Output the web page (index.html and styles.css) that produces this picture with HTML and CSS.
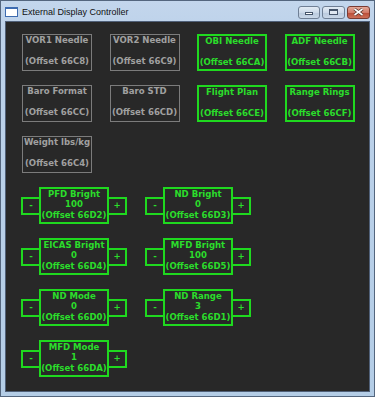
FILE: index.html
```html
<!DOCTYPE html>
<html lang="en">
  <head>
    <meta charset="UTF-8" />
    <meta name="viewport" content="width=device-width, initial-scale=1.0" />
    <title>External Display Controller</title>
    <link rel="stylesheet" href="styles.css">
  </head>
  <body>
    <div class="window">
      <div class="titlebar">
        <span class="app-icon"></span>
        <span class="title">External Display Controller</span>
        <div class="caption-btns">
          <span class="cap min"><i></i></span>
          <span class="cap max"><i></i></span>
          <span class="cap close">
            <svg width="11" height="8" viewBox="0 0 11 8">
              <path d="M1.5 1 L9.5 7 M9.5 1 L1.5 7" stroke="#4a2a24" stroke-width="3" />
              <path d="M1.5 1 L9.5 7 M9.5 1 L1.5 7" stroke="#fff" stroke-width="1.6" />
            </svg>
          </span>
        </div>
      </div>

      <div class="client">
        <div class="toggles">
          <div class="toggle off">VOR1 Needle<br><br>(Offset 66C8)</div>
          <div class="toggle off">VOR2 Needle<br><br>(Offset 66C9)</div>
          <div class="toggle on">OBI Needle<br><br>(Offset 66CA)</div>
          <div class="toggle on">ADF Needle<br><br>(Offset 66CB)</div>
          <div class="toggle off">Baro Format<br><br>(Offset 66CC)</div>
          <div class="toggle off">Baro STD<br><br>(Offset 66CD)</div>
          <div class="toggle on">Flight Plan<br><br>(Offset 66CE)</div>
          <div class="toggle on">Range Rings<br><br>(Offset 66CF)</div>
          <div class="toggle off">Weight lbs/kg<br><br>(Offset 66C4)</div>
        </div>

        <div class="spinners">
          <div class="spinner">
            <span class="step">-</span>
            <div class="value">PFD Bright<br>100<br>(Offset 66D2)</div>
            <span class="step">+</span>
          </div>
          <div class="spinner">
            <span class="step">-</span>
            <div class="value">ND Bright<br>0<br>(Offset 66D3)</div>
            <span class="step">+</span>
          </div>
          <div class="spinner">
            <span class="step">-</span>
            <div class="value">EICAS Bright<br>0<br>(Offset 66D4)</div>
            <span class="step">+</span>
          </div>
          <div class="spinner">
            <span class="step">-</span>
            <div class="value">MFD Bright<br>100<br>(Offset 66D5)</div>
            <span class="step">+</span>
          </div>
          <div class="spinner">
            <span class="step">-</span>
            <div class="value">ND Mode<br>0<br>(Offset 66D0)</div>
            <span class="step">+</span>
          </div>
          <div class="spinner">
            <span class="step">-</span>
            <div class="value">ND Range<br>3<br>(Offset 66D1)</div>
            <span class="step">+</span>
          </div>
          <div class="spinner">
            <span class="step">-</span>
            <div class="value">MFD Mode<br>1<br>(Offset 66DA)</div>
            <span class="step">+</span>
          </div>
        </div>
      </div>
    </div>
  </body>
</html>
```

FILE: styles.css
```css
* {
  box-sizing: border-box;
}
body {
  margin: 0;
  background-color: #fff;
  font-family: "Liberation Sans", Arial, sans-serif;
}
.window {
  width: 375px;
  height: 397px;
  display: flex;
  flex-direction: column;
  border: 1px solid #54667e;
  padding: 0 4px 4px 4px;
  background: linear-gradient(#c3d6ec, #bdd2ea 30px, #b4cde6);
}
/* title bar */
.titlebar {
  height: 20px;
  display: flex;
  align-items: center;
  margin: 0 -4px;
  padding: 0 4px 0 4px;
}
.app-icon {
  width: 13px;
  height: 10px;
  margin-top: 2px;
  border: 1px solid #3d6bb0;
  border-top-width: 2px;
  background-color: #fff;
}
.title {
  margin-left: 4px;
  margin-top: 1px;
  font-size: 9px;
  color: #111;
}
.caption-btns {
  margin-left: auto;
  display: flex;
  gap: 2px;
  margin-top: 2px;
}
.cap {
  width: 23px;
  height: 13px;
  display: flex;
  align-items: center;
  justify-content: center;
  border: 1px solid #6f7f95;
  border-radius: 3px;
  background: linear-gradient(#e3ebf5, #ccd9e9 50%, #b9c9dd 51%, #c9d7e8);
}
.cap.min {
  width: 22px;
}
.cap.min i {
  width: 8px;
  height: 3px;
  margin-top: 3px;
  background-color: #fff;
  border: 1px solid #46556b;
}
.cap.max i {
  width: 9px;
  height: 6px;
  border: 1px solid #46556b;
  border-top-width: 2px;
  background-color: #dfe7f1;
}
.cap.close {
  border-color: #7a3b33;
  background: linear-gradient(#e4a898, #d27a68 50%, #b94a36 51%, #cc6f58);
}
/* dark client area */
.client {
  flex: 1;
  border: 1px solid #506078;
  background-color: #282828;
  padding: 12px 0 0 16px;
  font-family: "DejaVu Sans Condensed", "Liberation Sans", sans-serif;
  font-size: 9.5px;
  font-weight: bold;
  text-align: center;
}
.toggles {
  display: grid;
  grid-template-columns: repeat(4, 70px);
  column-gap: 17.5px;
  row-gap: 14px;
}
.toggle {
  height: 37px;
  line-height: 10.5px;
  white-space: nowrap;
}
.toggle.off {
  border: 1px solid #7c7c7c;
  color: #a0a0a0;
}
.toggle.on {
  border: 2px solid #1fd91f;
  color: #2bdd2b;
}
.spinners {
  display: grid;
  grid-template-columns: repeat(2, 106px);
  column-gap: 18px;
  row-gap: 14px;
  margin: 14px 0 0 -1px;
}
.spinner {
  display: flex;
  align-items: center;
  color: #2bdd2b;
}
.step {
  width: 18px;
  height: 18px;
  line-height: 12px;
  border: 2px solid #1fd91f;
}
.step:first-child {
  border-right: none;
}
.step:last-child {
  border-left: none;
}
.value {
  width: 70px;
  height: 37px;
  border: 2px solid #1fd91f;
  line-height: 10.3px;
  white-space: nowrap;
}
```
